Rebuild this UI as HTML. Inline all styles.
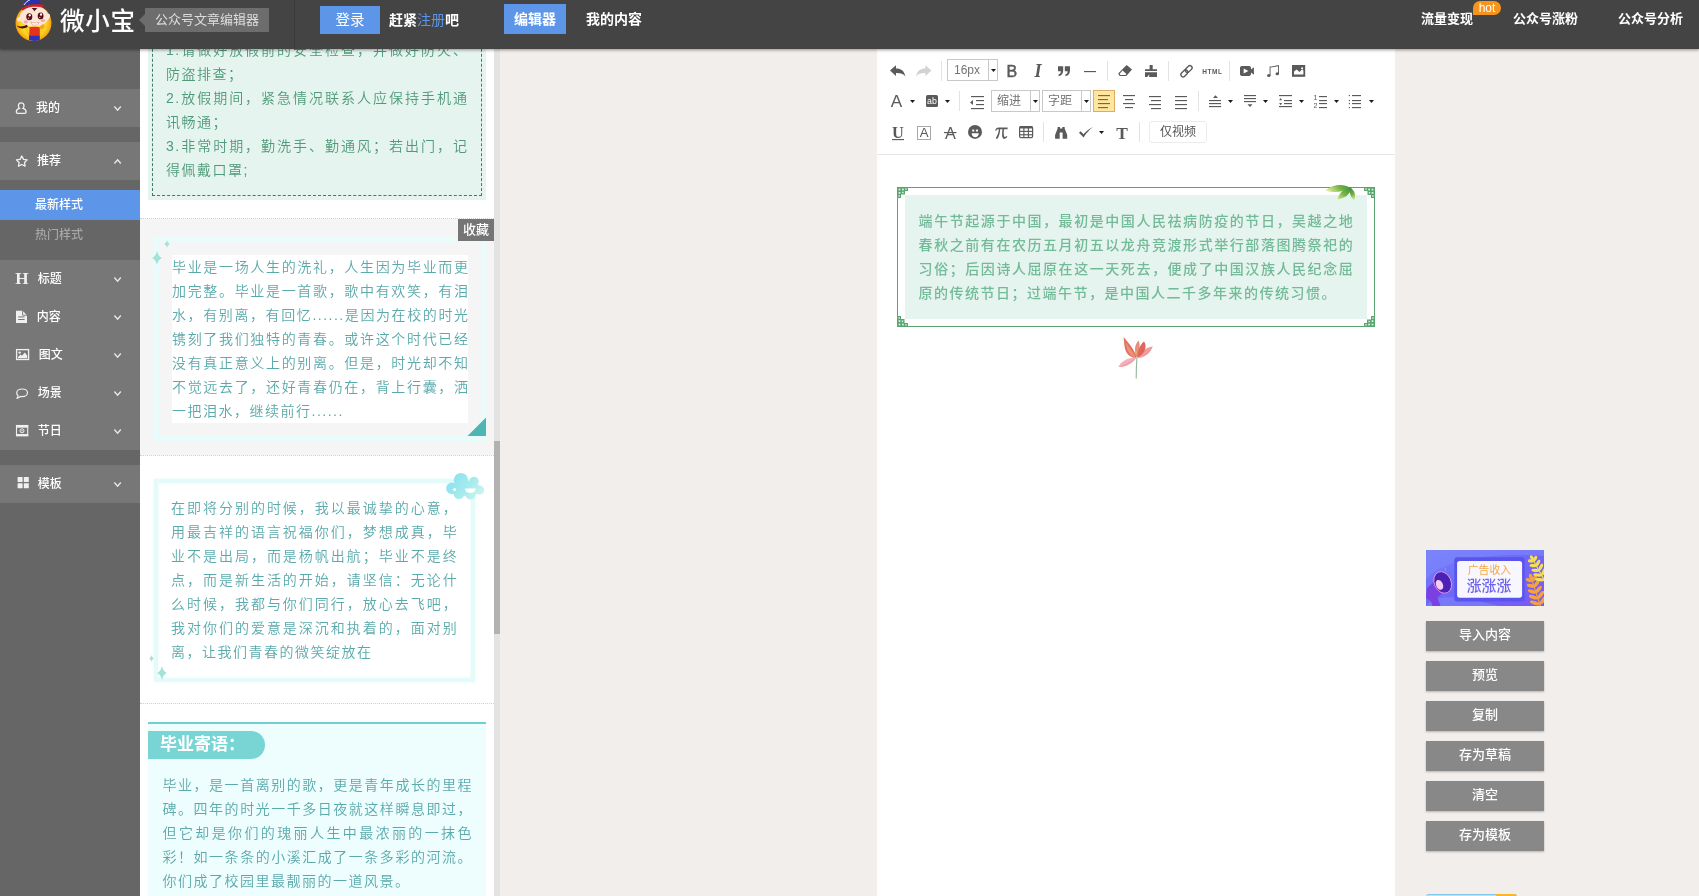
<!DOCTYPE html>
<html lang="zh-CN">
<head>
<meta charset="utf-8">
<title>微小宝 公众号文章编辑器</title>
<style>
*{box-sizing:border-box;margin:0;padding:0}
html,body{width:1699px;height:896px;overflow:hidden}
body{background:#f1eeeb;font-family:"Liberation Sans","Noto Sans CJK SC",sans-serif;position:relative;color:#333}
.abs{position:absolute}
#hd,#sb,#pn,#ed,#rt{will-change:transform}
/* header */
#hd{position:absolute;left:0;top:0;width:1699px;height:49px;background:#444;z-index:50;box-shadow:0 1px 3px rgba(0,0,0,.4)}
#hd .t{position:absolute;color:#fff;white-space:nowrap}
/* sidebar */
#sb{position:absolute;left:0;top:48px;width:140px;height:848px;background:#666;z-index:5}
#sb .it{position:absolute;left:0;width:140px;height:38px;background:#777;color:#fff;font-size:12px;line-height:39px;font-weight:500}
#sb .it span{position:absolute;left:36px;top:0}
#sb .it svg{position:absolute}
#sb .sub{position:absolute;left:0;width:140px;height:30px;line-height:31px;font-size:12px;padding-left:35px;color:#a6a6a6;font-weight:500}
#sb .sub.on{background:#5d96e9;color:#fff}
/* panel */
#pn{position:absolute;left:140px;top:48px;width:354px;height:848px;background:#fff;overflow:hidden}
#sc{position:absolute;left:494px;top:48px;width:6px;height:848px;background:#e3e3e3}
#sc i{position:absolute;left:0;top:393px;width:6px;height:193px;background:#b2b2b2}
.ln{position:absolute;height:24px;font-weight:350;line-height:24px;font-size:14px;letter-spacing:1.5px;white-space:nowrap}
.ln.j{text-align:justify;text-align-last:justify;white-space:nowrap;overflow:hidden}
/* editor */
#ed{position:absolute;left:877px;top:48px;width:518px;height:848px;background:#fff}
/* right */
.rb{position:absolute;left:1426px;width:118px;height:30px;background:#888;color:#fff;font-size:13px;line-height:28px;font-weight:500;text-align:center;box-shadow:0 1px 2px rgba(0,0,0,.25)}
</style>
</head>
<body>
<div id="hd">
<svg class="abs" style="left:12px;top:0" width="44" height="44" viewBox="12 0 44 44">
 <defs><radialGradient id="lg" cx="50%" cy="50%" r="52%"><stop offset="0" stop-color="#ffe640"/><stop offset=".7" stop-color="#fdd31c"/><stop offset=".93" stop-color="#f5a516"/><stop offset="1" stop-color="#d97a10"/></radialGradient></defs>
 <circle cx="33.5" cy="23.1" r="18" fill="url(#lg)"/>
 <path d="M22.8 6 C24.5 1 28 -3 33 -4 C37.5 -3 40 1 41 4.4 C34 3 28 4 22.8 6Z" fill="#2b2fb0"/>
 <path d="M23.9 5 C25.5 2.6 27.6 0.8 30.2 -0.4" stroke="#fff" stroke-width="1" fill="none"/>
 <path d="M21.8 8.4 C27 5 36 3.4 42.6 4.6 L43.2 7 C36 6.4 28 7.8 22.6 10.6Z" fill="#d9182e"/>
 <path d="M21 13 C24 8.4 30 6.6 36 6.8 C42 7 47 10 48.4 15 C50 15.4 50 19 48 19.6 C46.4 24 40.6 26.6 34 26.4 C27 26.4 22 23.6 20.6 20.4 C18.4 20.6 17.8 17.4 19.8 16.6 C19.8 15.4 20.2 14.2 21 13Z" fill="#fde6d8"/>
 <path d="M31.6 8.2 C33 9 34 10.4 34.2 11.6 C35 10.2 36.2 9.2 37.6 8.6 C35.6 8 33.6 8 31.6 8.2Z" fill="#4a150e"/>
 <ellipse cx="29.3" cy="16.7" rx="3" ry="3.5" fill="#5c0f12"/><ellipse cx="29.7" cy="15.3" rx="1.1" ry="1.3" fill="#fff"/><circle cx="28.5" cy="18.2" r=".6" fill="#f5c0b0"/>
 <ellipse cx="40.6" cy="15.9" rx="2.9" ry="3.4" fill="#5c0f12"/><ellipse cx="41" cy="14.5" rx="1.1" ry="1.3" fill="#fff"/><circle cx="39.8" cy="17.4" r=".6" fill="#f5c0b0"/>
 <ellipse cx="25.8" cy="21.8" rx="2.3" ry="1.6" fill="#f6a9a4"/><ellipse cx="43" cy="20.6" rx="2.2" ry="1.5" fill="#f6a9a4"/>
 <path d="M30.9 22 C33.4 23.2 36.4 23.2 38.9 22.2 C38.4 24.6 36.6 25.4 34.8 25.2 C32.8 25.2 31.4 24 30.9 22Z" fill="#fff" stroke="#c9604a" stroke-width=".4"/>
 <path d="M28.4 27.6 C30 26.6 38 26.4 39.8 27.4 L39.8 36 L29 36Z" fill="#e8321c"/>
 <path d="M29 35.8 H39.8 V40 C36.6 41.2 32.4 41.2 29 40Z" fill="#2f33b4"/>
 <path d="M26.6 28.4 C27.6 27.2 29 27 29.6 27.6 L29.2 34.6 C28 33.6 26.6 31.4 26.6 28.4Z" fill="#fdd838" stroke="#c78a14" stroke-width=".4"/>
 <path d="M16.6 25.6 C19.6 27 23.6 26.6 26.8 24.8 L27.8 26.8 C24.4 29.2 19 29.4 16.6 25.6Z" fill="#4a150e"/>
 <path d="M39.4 27.6 C40.4 25.8 42 24.4 43.8 24.2 C44.8 25.4 44.4 27.6 42.8 29 C41.6 29.8 40.2 29.4 39.4 27.6Z" fill="#f6a02a"/><ellipse cx="18.6" cy="19.6" rx="1.6" ry="2.2" fill="#fde6d8"/><ellipse cx="48.6" cy="16" rx="1.5" ry="2.2" fill="#fde6d8"/>
</svg>
<div class="t" style="left:60px;top:5px;font-size:24.5px;line-height:34px;letter-spacing:.8px;font-weight:500">微小宝</div>
<div class="abs" style="left:139px;top:14px;width:0;height:0;border:6px solid transparent;border-left:0;border-right:6px solid #6d6d6d"></div>
<div class="abs" style="left:145px;top:8px;width:124px;height:24px;background:#6d6d6d;color:#ddd;font-size:13px;line-height:24px;text-align:center">公众号文章编辑器</div>
<div class="abs" style="left:294px;top:0;width:1px;height:49px;background:#3a3a3a"></div>
<div class="abs" style="left:320px;top:6px;width:60px;height:28px;background:#5d96e9;color:#fff;font-size:14.5px;line-height:28px;text-align:center">登录</div>
<div class="t" style="left:389px;top:10px;font-size:14px;line-height:20px;font-weight:700">赶紧<span style="color:#5d96e9;font-weight:400">注册</span>吧</div>
<div class="abs" style="left:504px;top:4px;width:62px;height:30px;background:#5d96e9;color:#fff;font-size:14px;line-height:30px;text-align:center;font-weight:700">编辑器</div>
<div class="t" style="left:586px;top:9px;font-size:14px;line-height:20px;font-weight:700">我的内容</div>
<div class="t" style="left:1421px;top:9px;font-size:13px;line-height:20px;font-weight:700">流量变现</div>
<div class="abs" style="left:1473px;top:1px;width:28px;height:14px;background:#f7941d;border-radius:7px 7px 7px 0;color:#fff;font-size:12px;line-height:14.5px;text-align:center">hot</div>
<div class="t" style="left:1513px;top:9px;font-size:13px;line-height:20px;font-weight:700">公众号涨粉</div>
<div class="t" style="left:1618px;top:9px;font-size:13px;line-height:20px;font-weight:700">公众号分析</div>
</div>
<div id="sb">
<div class="it" style="top:41px"><span style="left:36px">我的</span></div>
<svg class="abs" style="left:112px;top:55px" width="12" height="10" viewBox="112 103 12 10"><path d="M114.4 106.5 L117.6 110.1 L120.8 106.5" fill="none" stroke="#e8e8e8" stroke-width="1.4"/></svg>
<div class="it" style="top:94px"><span style="left:37px">推荐</span></div>
<svg class="abs" style="left:112px;top:108px" width="12" height="10" viewBox="112 156 12 10"><path d="M114.4 163.5 L117.6 159.9 L120.8 163.5" fill="none" stroke="#e8e8e8" stroke-width="1.4"/></svg>
<div class="it" style="top:212px"><span style="left:37.8px">标题</span></div>
<svg class="abs" style="left:112px;top:226px" width="12" height="10" viewBox="112 274 12 10"><path d="M114.4 277.5 L117.6 281.1 L120.8 277.5" fill="none" stroke="#e8e8e8" stroke-width="1.4"/></svg>
<div class="it" style="top:250px"><span style="left:36.7px">内容</span></div>
<svg class="abs" style="left:112px;top:264px" width="12" height="10" viewBox="112 312 12 10"><path d="M114.4 315.5 L117.6 319.1 L120.8 315.5" fill="none" stroke="#e8e8e8" stroke-width="1.4"/></svg>
<div class="it" style="top:288px"><span style="left:38.8px">图文</span></div>
<svg class="abs" style="left:112px;top:302px" width="12" height="10" viewBox="112 350 12 10"><path d="M114.4 353.5 L117.6 357.1 L120.8 353.5" fill="none" stroke="#e8e8e8" stroke-width="1.4"/></svg>
<div class="it" style="top:326px"><span style="left:37.8px">场景</span></div>
<svg class="abs" style="left:112px;top:340px" width="12" height="10" viewBox="112 388 12 10"><path d="M114.4 391.5 L117.6 395.1 L120.8 391.5" fill="none" stroke="#e8e8e8" stroke-width="1.4"/></svg>
<div class="it" style="top:364px"><span style="left:37.8px">节日</span></div>
<svg class="abs" style="left:112px;top:378px" width="12" height="10" viewBox="112 426 12 10"><path d="M114.4 429.5 L117.6 433.1 L120.8 429.5" fill="none" stroke="#e8e8e8" stroke-width="1.4"/></svg>
<div class="it" style="top:417px"><span style="left:37.8px">模板</span></div>
<svg class="abs" style="left:112px;top:431px" width="12" height="10" viewBox="112 479 12 10"><path d="M114.4 482.5 L117.6 486.1 L120.8 482.5" fill="none" stroke="#e8e8e8" stroke-width="1.4"/></svg>
<svg class="abs" style="left:14px;top:52px" width="15" height="16" viewBox="14 100 15 16"><path d="M21.2 102.9 C23 102.9 24 104.2 24 105.8 C24 106.9 23.6 107.8 22.9 108.4 C25 108.9 26.1 110.2 26.1 112 C26.1 113 25.5 113.4 24.6 113.4 H17.8 C16.9 113.4 16.3 113 16.3 112 C16.3 110.2 17.4 108.9 19.5 108.4 C18.8 107.8 18.4 106.9 18.4 105.8 C18.4 104.2 19.4 102.9 21.2 102.9Z" fill="none" stroke="#f0f0f0" stroke-width="1.3"/></svg>
<svg class="abs" style="left:14px;top:105px" width="16" height="16" viewBox="14 153 16 16"><path d="M21.8 156 L23.5 159.4 L27.2 159.9 L24.5 162.5 L25.1 166.2 L21.8 164.5 L18.5 166.2 L19.1 162.5 L16.4 159.9 L20.1 159.4Z" fill="none" stroke="#f0f0f0" stroke-width="1.3" stroke-linejoin="round"/></svg>
<svg class="abs" style="left:14px;top:222px" width="16" height="17" viewBox="14 270 16 17"><text x="22" y="284.3" text-anchor="middle" font-family="Liberation Serif,serif" font-weight="bold" font-size="17.2" fill="#f0f0f0">H</text></svg>
<svg class="abs" style="left:14px;top:260px" width="16" height="17" viewBox="14 308 16 17"><path d="M16 310.8 H22.6 L27 315.2 V323.1 H16Z" fill="#f0f0f0"/><path d="M22.6 310.8 V315.2 H27" fill="none" stroke="#777" stroke-width=".9"/><rect x="18.2" y="316.4" width="6.4" height="1" fill="#777"/><rect x="18.2" y="319" width="6.4" height="1" fill="#777"/></svg>
<svg class="abs" style="left:14px;top:299px" width="17" height="15" viewBox="14 347 17 15"><rect x="16.6" y="349.6" width="12" height="9.9" fill="none" stroke="#f0f0f0" stroke-width="1.3"/><circle cx="19.6" cy="352.6" r="1.2" fill="#f0f0f0"/><path d="M18 358.2 L18 357 L20.6 354.6 L22 355.8 L24.8 352.4 L27.2 355.4 V358.2Z" fill="#f0f0f0"/></svg>
<svg class="abs" style="left:14px;top:338px" width="17" height="15" viewBox="14 386 17 15"><path d="M22.2 389 C25.2 389 27.5 390.6 27.5 392.8 C27.5 395 25.2 396.6 22.2 396.6 C21.6 396.6 21 396.5 20.5 396.4 C19.6 397.4 18.4 398 16.9 398.3 C17.6 397.5 18 396.7 18.1 395.8 C17.2 395 16.7 394 16.7 392.8 C16.7 390.6 19.2 389 22.2 389Z" fill="none" stroke="#f0f0f0" stroke-width="1.2" stroke-linejoin="round"/></svg>
<svg class="abs" style="left:14px;top:375px" width="17" height="15" viewBox="14 423 17 15"><rect x="16.5" y="425.5" width="11.2" height="10.2" fill="none" stroke="#f0f0f0" stroke-width="1.1"/><rect x="16" y="425" width="12.2" height="2.7" fill="#f0f0f0"/><rect x="16" y="434" width="12.2" height="2.2" fill="#f0f0f0"/><circle cx="22" cy="430.8" r="2" fill="none" stroke="#f0f0f0" stroke-width="1"/><circle cx="22" cy="430.8" r=".7" fill="#f0f0f0"/></svg>
<svg class="abs" style="left:16px;top:427px" width="15" height="15" viewBox="16 475 15 15"><rect x="17.6" y="477" width="5" height="5" rx=".5" fill="#f0f0f0"/><rect x="23.8" y="477" width="5" height="5" rx=".5" fill="#f0f0f0"/><rect x="17.6" y="483.2" width="5" height="5" rx=".5" fill="#f0f0f0"/><rect x="23.8" y="483.2" width="5" height="5" rx=".5" fill="#f0f0f0"/></svg>
<div class="sub on" style="top:142px">最新样式</div>
<div class="sub" style="top:172px">热门样式</div>
</div>
<div id="pn">
<div class="abs" style="left:8px;top:-28px;width:338px;height:179.5px;background:#e5f4ee"></div>
<div class="abs" style="left:12px;top:-24px;width:330px;height:171.5px;border:1px dashed #3a8062"></div>
<div class="ln j" style="left:26px;top:-10px;width:302.5px;color:#4f9a7a">1.请做好放假前的安全检查，并做好防火、</div>
<div class="ln" style="left:26px;top:14px;width:302.5px;color:#4f9a7a">防盗排查；</div>
<div class="ln j" style="left:26px;top:38px;width:302.5px;color:#4f9a7a">2.放假期间，紧急情况联系人应保持手机通</div>
<div class="ln" style="left:26px;top:62px;width:302.5px;color:#4f9a7a">讯畅通；</div>
<div class="ln j" style="left:26px;top:86px;width:302.5px;color:#4f9a7a">3.非常时期，勤洗手、勤通风；若出门，记</div>
<div class="ln" style="left:26px;top:110px;width:302.5px;color:#4f9a7a">得佩戴口罩;</div>
<div class="abs" style="left:0;top:170px;width:354px;height:0;border-top:1px dotted #cfcfcf"></div>
<div class="abs" style="left:0;top:407px;width:354px;height:0;border-top:1px dotted #cfcfcf"></div>
<div class="abs" style="left:0;top:655px;width:354px;height:0;border-top:1px dotted #cfcfcf"></div>
<div class="abs" style="left:0;top:171px;width:354px;height:236px;background:#f5f5f5"></div>
<div class="abs" style="left:14px;top:189px;width:332px;height:204px;border:5px solid #e9fcfb;box-shadow:0 0 2px #e9fcfb, inset 0 0 2px #e9fcfb"></div>
<div class="abs" style="left:31.5px;top:207px;width:296.5px;height:168px;background:#fff"></div>
<div class="ln j" style="left:32px;top:207px;width:297.5px;color:#5aa9ab">毕业是一场人生的洗礼，人生因为毕业而更</div>
<div class="ln j" style="left:32px;top:231px;width:297.5px;color:#5aa9ab">加完整。毕业是一首歌，歌中有欢笑，有泪</div>
<div class="ln j" style="left:32px;top:255px;width:297.5px;color:#5aa9ab">水，有别离，有回忆......是因为在校的时光</div>
<div class="ln j" style="left:32px;top:279px;width:297.5px;color:#5aa9ab">镌刻了我们独特的青春。或许这个时代已经</div>
<div class="ln j" style="left:32px;top:303px;width:297.5px;color:#5aa9ab">没有真正意义上的别离。但是，时光却不知</div>
<div class="ln j" style="left:32px;top:327px;width:297.5px;color:#5aa9ab">不觉远去了，还好青春仍在，背上行囊，洒</div>
<div class="ln" style="left:32px;top:351px;width:297.5px;color:#5aa9ab">一把泪水，继续前行......</div>
<div class="abs" style="left:318px;top:171px;width:36px;height:22px;background:#757575;color:#fff;font-size:13px;font-weight:500;line-height:22px;text-align:center">收藏</div>
<svg class="abs" style="left:24.3px;top:192.0px" width="6" height="8" viewBox="0 0 10 14"><path d="M5 0 C5.8 3.6 7.4 5.8 10 7 C7.4 8.2 5.8 10.4 5 14 C4.2 10.4 2.6 8.2 0 7 C2.6 5.8 4.2 3.6 5 0Z" fill="#a2e2d7"/></svg>
<svg class="abs" style="left:11.7px;top:202.8px" width="10" height="14" viewBox="0 0 10 14"><path d="M5 0 C5.8 3.6 7.4 5.8 10 7 C7.4 8.2 5.8 10.4 5 14 C4.2 10.4 2.6 8.2 0 7 C2.6 5.8 4.2 3.6 5 0Z" fill="#a2e2d7"/></svg>
<svg class="abs" style="left:326.5px;top:368.5px" width="19.5" height="19.5" viewBox="0 0 20 20"><path d="M20 0 L20 20 L0 20Z" fill="#4db5b3"/></svg>
<div class="abs" style="left:13.5px;top:430.5px;width:321.5px;height:203.5px;border:4px solid #e4fbfa;box-shadow:0 0 3px #e6fbfa, inset 0 0 3px #e6fbfa"></div>
<div class="ln j" style="left:31px;top:448px;width:287.2px;color:#5aa9ab">在即将分别的时候，我以最诚挚的心意，</div>
<div class="ln j" style="left:31px;top:472px;width:287.2px;color:#5aa9ab">用最吉祥的语言祝福你们，梦想成真，毕</div>
<div class="ln j" style="left:31px;top:496px;width:287.2px;color:#5aa9ab">业不是出局，而是杨帆出航；毕业不是终</div>
<div class="ln j" style="left:31px;top:520px;width:287.2px;color:#5aa9ab">点，而是新生活的开始，请坚信：无论什</div>
<div class="ln j" style="left:31px;top:544px;width:287.2px;color:#5aa9ab">么时候，我都与你们同行，放心去飞吧，</div>
<div class="ln j" style="left:31px;top:568px;width:287.2px;color:#5aa9ab">我对你们的爱意是深沉和执着的，面对别</div>
<div class="ln" style="left:31px;top:592px;width:287.2px;color:#5aa9ab">离，让我们青春的微笑绽放在</div>
<svg class="abs" style="left:8.5px;top:606.5px" width="5" height="7" viewBox="0 0 10 14"><path d="M5 0 C5.8 3.6 7.4 5.8 10 7 C7.4 8.2 5.8 10.4 5 14 C4.2 10.4 2.6 8.2 0 7 C2.6 5.8 4.2 3.6 5 0Z" fill="#a2e2d7"/></svg>
<svg class="abs" style="left:17.0px;top:617.5px" width="10" height="14" viewBox="0 0 10 14"><path d="M5 0 C5.8 3.6 7.4 5.8 10 7 C7.4 8.2 5.8 10.4 5 14 C4.2 10.4 2.6 8.2 0 7 C2.6 5.8 4.2 3.6 5 0Z" fill="#a2e2d7"/></svg>
<svg class="abs" style="left:304px;top:423px" width="42" height="30" viewBox="444 471 42 30">
<defs><linearGradient id="cg" gradientUnits="userSpaceOnUse" x1="448" y1="474" x2="482" y2="500"><stop offset="0" stop-color="#86e0ee"/><stop offset=".55" stop-color="#a6ebee"/><stop offset="1" stop-color="#d2f6f0"/></linearGradient></defs>
<g fill="url(#cg)"><circle cx="461" cy="480.2" r="7.2"/><circle cx="474" cy="481.6" r="4.8"/><circle cx="452" cy="488.4" r="5.8"/><circle cx="479.6" cy="490" r="4.6"/><circle cx="459" cy="493.6" r="5.4"/><circle cx="470.6" cy="494.2" r="5.2"/><ellipse cx="465.5" cy="488.5" rx="14.5" ry="7.6"/></g>
<circle cx="454.6" cy="489.4" r="1.5" fill="#fff"/>
<path d="M465 488.4 H475.8 C475.6 491.4 473.4 493 470.4 493 C467.4 493 465.2 491.4 465 488.4Z" fill="#fff"/></svg>
<div class="abs" style="left:8px;top:673.5px;width:338px;height:180px;background:#eefdfd;border-top:2.5px solid #70cfcf"></div>
<div class="abs" style="left:8px;top:683px;width:117px;height:27.5px;background:#79d4d4;border-radius:0 14px 14px 0;color:#fff;font:700 17px/27px 'Liberation Sans','Noto Sans CJK SC',sans-serif;padding-left:12px;letter-spacing:0">毕业寄语：</div>
<div class="ln j" style="left:22.5px;top:725px;width:310.5px;color:#5aa9ab">毕业，是一首离别的歌，更是青年成长的里程</div>
<div class="ln j" style="left:22.5px;top:749px;width:310.5px;color:#5aa9ab">碑。四年的时光一千多日夜就这样瞬息即过，</div>
<div class="ln j" style="left:22.5px;top:773px;width:310.5px;color:#5aa9ab">但它却是你们的瑰丽人生中最浓丽的一抹色</div>
<div class="ln j" style="left:22.5px;top:797px;width:310.5px;color:#5aa9ab">彩！如一条条的小溪汇成了一条多彩的河流。</div>
<div class="ln" style="left:22.5px;top:821px;width:310.5px;color:#5aa9ab">你们成了校园里最靓丽的一道风景。</div>
</div>
<div id="sc"><i></i></div>
<div id="ed">
<div class="abs" style="left:0;top:106px;width:518px;height:1px;background:#e6e6e6"></div>
<svg class="abs" style="left:9px;top:12px" width="24" height="22" viewBox="886 60 24 22"><path d="M890 70.6 L896 65.2 V68.4 C900.5 68.3 904.2 70.3 905.4 76.4 C903.2 73.6 900.6 72.9 896 73 V76Z" fill="#5a5a5a"/></svg>
<svg class="abs" style="left:35px;top:12px" width="24" height="22" viewBox="912 60 24 22"><g transform="translate(1821.4,0) scale(-1,1)"><path d="M890 70.6 L896 65.2 V68.4 C900.5 68.3 904.2 70.3 905.4 76.4 C903.2 73.6 900.6 72.9 896 73 V76Z" fill="#d2d2d2"/></g></svg>
<div class="abs" style="left:64px;top:13px;width:1px;height:20px;background:#e3e3e3"></div>
<div class="abs" style="left:70px;top:11px;width:51px;height:22px;border:1px solid #c8c8c8;background:#fff"></div><div class="abs" style="left:111px;top:11px;width:1px;height:22px;background:#c8c8c8"></div><div class="abs" style="left:77px;top:11px;height:22px;line-height:22px;font-size:12px;color:#747474;white-space:nowrap">16px</div><svg class="abs" style="left:113px;top:20px" width="7" height="5" viewBox="990 68 7 5"><path d="M991 69 H996 L993.5 72Z" fill="#1a1a1a"/></svg>
<svg class="abs" style="left:125px;top:12px" width="20" height="22" viewBox="1002 60 20 22"><text x="1011.8" y="76.6" text-anchor="middle" font-family="Liberation Sans,sans-serif" font-size="16" fill="#5a5a5a" stroke="#5a5a5a" stroke-width=".45">B</text></svg>
<svg class="abs" style="left:151px;top:12px" width="20" height="22" viewBox="1028 60 20 22"><text x="1038" y="77" text-anchor="middle" font-family="Liberation Serif,serif" font-size="18.2" fill="#5a5a5a" font-style="italic" font-weight="bold">I</text></svg>
<svg class="abs" style="left:177px;top:12px" width="20" height="22" viewBox="1054 60 20 22"><path d="M1058 66.3 H1063.2 V70.6 C1063.2 73.6 1061.8 75.6 1058.6 76.3 V74.5 C1060 74.1 1060.8 73 1060.8 71.2 H1058Z M1064.8 66.3 H1070.0 V70.6 C1070.0 73.6 1068.6 75.6 1065.3999999999999 76.3 V74.5 C1066.8 74.1 1067.6 73 1067.6 71.2 H1064.8Z" fill="#5a5a5a"/></svg>
<svg class="abs" style="left:203px;top:12px" width="20" height="22" viewBox="1080 60 20 22"><rect x="1084" y="71" width="12" height="1.15" fill="#5a5a5a"/></svg>
<div class="abs" style="left:230px;top:13px;width:1px;height:20px;background:#e3e3e3"></div>
<svg class="abs" style="left:237px;top:12px" width="22" height="22" viewBox="1114 60 22 22"><path d="M1126.6 64.9 L1132 69.6 L1126.3 76 H1119.6 L1118.2 73.6Z" fill="#5a5a5a"/><path d="M1122.6 70.6 L1126.4 73.9 L1125.6 74.9 H1120.3 L1119.7 73.8Z" fill="#fff"/></svg>
<svg class="abs" style="left:264px;top:12px" width="20" height="22" viewBox="1141 60 20 22"><path d="M1149.6 65 H1152.7 V69.2 H1157 V71 H1145 V69.2 H1149.6Z M1145 72.2 H1157 V77 H1149.2 V74.4 L1147.2 77 H1145Z" fill="#5a5a5a"/></svg>
<div class="abs" style="left:291px;top:13px;width:1px;height:20px;background:#e3e3e3"></div>
<svg class="abs" style="left:299px;top:12px" width="22" height="22" viewBox="1176 60 22 22"><g fill="none" stroke="#5a5a5a" stroke-width="1.35" transform="rotate(-45 1186.5 71.2)"><rect x="1179.5" y="69" width="7.9" height="4.4" rx="2.2"/><rect x="1185.6" y="69" width="7.9" height="4.4" rx="2.2"/></g></svg>
<svg class="abs" style="left:323px;top:12px" width="24" height="22" viewBox="1200 60 24 22"><text x="1212.3" y="74" text-anchor="middle" font-family="Liberation Sans,sans-serif" font-size="6.5" fill="#5a5a5a" font-weight="bold" letter-spacing=".55">HTML</text></svg>
<div class="abs" style="left:352px;top:13px;width:1px;height:20px;background:#e3e3e3"></div>
<svg class="abs" style="left:360px;top:12px" width="20" height="22" viewBox="1237 60 20 22"><path d="M1240 68 C1240 66.8 1240.8 66 1242 66 H1249 C1250.2 66 1251 66.8 1251 68 V69.4 L1253.9 67.2 V74.8 L1251 72.6 V74 C1251 75.2 1250.2 76 1249 76 H1242 C1240.8 76 1240 75.2 1240 74Z" fill="#5a5a5a"/><path d="M1243.7 68.4 L1248.4 71 L1243.7 73.6Z" fill="#fff"/></svg>
<svg class="abs" style="left:386px;top:12px" width="20" height="22" viewBox="1263 60 20 22"><path d="M1269.6 66.6 C1272.5 66.4 1275.5 65.8 1278.9 64.9 V73.8 H1278 V66.2 C1275.4 66.9 1272.9 67.3 1270.5 67.5 V75.4 H1269.6Z" fill="#5a5a5a"/><ellipse cx="1268.8" cy="75.4" rx="1.75" ry="1.5" fill="#5a5a5a"/><ellipse cx="1277.3" cy="73.8" rx="1.75" ry="1.5" fill="#5a5a5a"/></svg>
<svg class="abs" style="left:412px;top:12px" width="20" height="22" viewBox="1289 60 20 22"><rect x="1292" y="65" width="13.2" height="11.8" fill="#5a5a5a"/><path d="M1294 74.4 V71.6 L1296.6 69.6 L1299.6 72 L1302.2 69.2 L1303.4 70.4 V74.4Z" fill="#fff"/><circle cx="1302.1" cy="68.3" r="1" fill="#fff"/></svg>
<svg class="abs" style="left:9px;top:42px" width="22" height="22" viewBox="886 90 22 22"><text x="896.5" y="107" text-anchor="middle" font-family="Liberation Sans,sans-serif" font-size="17.2" fill="#5a5a5a" >A</text></svg>
<svg class="abs" style="left:32px;top:51px" width="7" height="5" viewBox="909 99 7 5"><path d="M910 100 H915 L912.5 103Z" fill="#1a1a1a"/></svg>
<svg class="abs" style="left:45px;top:42px" width="20" height="22" viewBox="922 90 20 22"><rect x="926" y="95" width="12" height="12" rx="1.6" fill="#5a5a5a"/><text x="932" y="104.2" text-anchor="middle" font-family="Liberation Sans,sans-serif" font-size="8.8" fill="#fff" >ab</text></svg>
<svg class="abs" style="left:67px;top:51px" width="7" height="5" viewBox="944 99 7 5"><path d="M945 100 H950 L947.5 103Z" fill="#1a1a1a"/></svg>
<div class="abs" style="left:82px;top:43px;width:1px;height:20px;background:#e3e3e3"></div>
<svg class="abs" style="left:90px;top:42px" width="20" height="22" viewBox="967 90 20 22"><rect x="971" y="96" width="13" height="1.15" fill="#5a5a5a"/><rect x="976" y="100" width="8" height="1.15" fill="#5a5a5a"/><rect x="976" y="104" width="8" height="1.15" fill="#5a5a5a"/><rect x="971" y="108" width="13" height="1.15" fill="#5a5a5a"/><path d="M970 102.5 L973 100 V105Z" fill="#5a5a5a"/></svg>
<div class="abs" style="left:114px;top:42px;width:49px;height:22px;border:1px solid #c8c8c8;background:#fff"></div><div class="abs" style="left:153px;top:42px;width:1px;height:22px;background:#c8c8c8"></div><div class="abs" style="left:120px;top:42px;height:22px;line-height:22px;font-size:12px;color:#747474;white-space:nowrap">缩进</div><svg class="abs" style="left:155px;top:51px" width="7" height="5" viewBox="1032 99 7 5"><path d="M1033 100 H1038 L1035.5 103Z" fill="#1a1a1a"/></svg>
<div class="abs" style="left:165px;top:42px;width:49px;height:22px;border:1px solid #c8c8c8;background:#fff"></div><div class="abs" style="left:204px;top:42px;width:1px;height:22px;background:#c8c8c8"></div><div class="abs" style="left:171px;top:42px;height:22px;line-height:22px;font-size:12px;color:#747474;white-space:nowrap">字距</div><svg class="abs" style="left:206px;top:51px" width="7" height="5" viewBox="1083 99 7 5"><path d="M1084 100 H1089 L1086.5 103Z" fill="#1a1a1a"/></svg>
<div class="abs" style="left:216px;top:42px;width:22px;height:22px;background:#ffe69f;border:1px solid #dcac6c"></div>
<svg class="abs" style="left:217px;top:43px" width="20" height="20" viewBox="1094 91 20 20"><rect x="1098" y="95" width="12" height="1.15" fill="#7a6a36"/><rect x="1098" y="99" width="10" height="1.15" fill="#7a6a36"/><rect x="1098" y="103" width="12" height="1.15" fill="#7a6a36"/><rect x="1098" y="107" width="10" height="1.15" fill="#7a6a36"/></svg>
<svg class="abs" style="left:242px;top:43px" width="20" height="20" viewBox="1119 91 20 20"><rect x="1123" y="95" width="12" height="1.15" fill="#5a5a5a"/><rect x="1125" y="99" width="8" height="1.15" fill="#5a5a5a"/><rect x="1123" y="103" width="12" height="1.15" fill="#5a5a5a"/><rect x="1125" y="107" width="8" height="1.15" fill="#5a5a5a"/></svg>
<svg class="abs" style="left:268px;top:43px" width="20" height="20" viewBox="1145 91 20 20"><rect x="1149" y="96" width="12" height="1.15" fill="#5a5a5a"/><rect x="1151" y="100" width="10" height="1.15" fill="#5a5a5a"/><rect x="1149" y="104" width="12" height="1.15" fill="#5a5a5a"/><rect x="1151" y="108" width="10" height="1.15" fill="#5a5a5a"/></svg>
<svg class="abs" style="left:294px;top:43px" width="20" height="20" viewBox="1171 91 20 20"><rect x="1175" y="96" width="12" height="1.15" fill="#5a5a5a"/><rect x="1175" y="100" width="12" height="1.15" fill="#5a5a5a"/><rect x="1175" y="104" width="12" height="1.15" fill="#5a5a5a"/><rect x="1175" y="108" width="12" height="1.15" fill="#5a5a5a"/></svg>
<div class="abs" style="left:321px;top:43px;width:1px;height:20px;background:#e3e3e3"></div>
<svg class="abs" style="left:328px;top:43px" width="20" height="20" viewBox="1205 91 20 20"><path d="M1215.5 95.2 L1218 98 H1213Z" fill="#5a5a5a"/><rect x="1209" y="100" width="12" height="1.15" fill="#5a5a5a"/><rect x="1209" y="103" width="12" height="1.15" fill="#5a5a5a"/><rect x="1209" y="106" width="12" height="1.15" fill="#5a5a5a"/></svg>
<svg class="abs" style="left:350px;top:51px" width="7" height="5" viewBox="1227 99 7 5"><path d="M1228 100 H1233 L1230.5 103Z" fill="#1a1a1a"/></svg>
<svg class="abs" style="left:363px;top:43px" width="20" height="20" viewBox="1240 91 20 20"><rect x="1244" y="95" width="12" height="1.15" fill="#5a5a5a"/><rect x="1244" y="98" width="12" height="1.15" fill="#5a5a5a"/><rect x="1244" y="101" width="12" height="1.15" fill="#5a5a5a"/><path d="M1250 107 L1252.5 104.2 H1247.5Z" fill="#5a5a5a"/></svg>
<svg class="abs" style="left:385px;top:51px" width="7" height="5" viewBox="1262 99 7 5"><path d="M1263 100 H1268 L1265.5 103Z" fill="#1a1a1a"/></svg>
<svg class="abs" style="left:398px;top:43px" width="20" height="20" viewBox="1275 91 20 20"><rect x="1279" y="95" width="13" height="1.15" fill="#5a5a5a"/><rect x="1284" y="100" width="8" height="1.15" fill="#5a5a5a"/><rect x="1284" y="103" width="8" height="1.15" fill="#5a5a5a"/><rect x="1279" y="106" width="13" height="1.15" fill="#5a5a5a"/><path d="M1280.6 98 L1282.1 100.2 H1279.1Z M1280.6 105.2 L1282.1 103 H1279.1Z" fill="#5a5a5a"/></svg>
<svg class="abs" style="left:420.5px;top:51px" width="7" height="5" viewBox="1297.5 99 7 5"><path d="M1298.5 100 H1303.5 L1301.0 103Z" fill="#1a1a1a"/></svg>
<svg class="abs" style="left:433px;top:43px" width="20" height="20" viewBox="1310 91 20 20"><rect x="1319" y="96" width="8" height="1.15" fill="#5a5a5a"/><rect x="1319" y="100" width="8" height="1.15" fill="#5a5a5a"/><rect x="1319" y="103" width="8" height="1.15" fill="#5a5a5a"/><rect x="1319" y="107" width="8" height="1.15" fill="#5a5a5a"/><text x="1313.6" y="99.6" text-anchor="start" font-family="Liberation Sans,sans-serif" font-size="7.2" fill="#5a5a5a" >1</text><text x="1313.6" y="108" text-anchor="start" font-family="Liberation Sans,sans-serif" font-size="7.2" fill="#5a5a5a" >2</text></svg>
<svg class="abs" style="left:455.5px;top:51px" width="7" height="5" viewBox="1332.5 99 7 5"><path d="M1333.5 100 H1338.5 L1336.0 103Z" fill="#1a1a1a"/></svg>
<svg class="abs" style="left:468px;top:43px" width="20" height="20" viewBox="1345 91 20 20"><rect x="1352" y="95" width="9" height="1.15" fill="#5a5a5a"/><rect x="1352" y="100" width="9" height="1.15" fill="#5a5a5a"/><rect x="1352" y="103" width="9" height="1.15" fill="#5a5a5a"/><rect x="1352" y="107" width="9" height="1.15" fill="#5a5a5a"/><rect x="1348.8" y="95" width="1.2000000000000455" height="1.15" fill="#5a5a5a"/><rect x="1348.8" y="100" width="1.2000000000000455" height="1.15" fill="#5a5a5a"/><rect x="1348.8" y="103" width="1.2000000000000455" height="1.15" fill="#5a5a5a"/><rect x="1348.8" y="107" width="1.2000000000000455" height="1.15" fill="#5a5a5a"/></svg>
<svg class="abs" style="left:490.5px;top:51px" width="7" height="5" viewBox="1367.5 99 7 5"><path d="M1368.5 100 H1373.5 L1371.0 103Z" fill="#1a1a1a"/></svg>
<svg class="abs" style="left:10px;top:74px" width="22" height="22" viewBox="887 122 22 22"><text x="898" y="138" text-anchor="middle" font-family="Liberation Serif,serif" font-size="16.4" fill="#5a5a5a" font-weight="bold">U</text><rect x="892" y="139" width="12" height="1.15" fill="#5a5a5a"/></svg>
<svg class="abs" style="left:37px;top:74px" width="20" height="22" viewBox="914 122 20 22"><rect x="917.5" y="126.5" width="13" height="13" fill="none" stroke="#a8a8a8" stroke-width="1"/><text x="924.2" y="137.4" text-anchor="middle" font-family="Liberation Sans,sans-serif" font-size="13.2" fill="#5a5a5a" >A</text></svg>
<svg class="abs" style="left:63px;top:74px" width="20" height="22" viewBox="940 122 20 22"><text x="950.4" y="138.7" text-anchor="middle" font-family="Liberation Sans,sans-serif" font-size="16.2" fill="#5a5a5a" >A</text><rect x="944" y="132" width="12.5" height="1.15" fill="#5a5a5a"/></svg>
<svg class="abs" style="left:88px;top:74px" width="20" height="22" viewBox="965 122 20 22"><circle cx="975" cy="131.9" r="7" fill="#5a5a5a"/><rect x="972.2" y="129.6" width="2.1" height="1.9" fill="#fff"/><rect x="975.9" y="129.6" width="2.1" height="1.9" fill="#fff"/><path d="M971.6 133.3 H978.9 C978.6 135.8 977.1 137.3 975.2 137.3 C973.3 137.3 971.9 135.8 971.6 133.3Z" fill="#fff"/></svg>
<svg class="abs" style="left:114px;top:74px" width="20" height="22" viewBox="991 122 20 22"><path d="M995.2 130.6 C995.8 128.4 996.9 127.5 998.6 127.5 H1007.6 V129.2 H1004 C1003.7 131.8 1003.6 134.2 1004 136 C1004.3 137.2 1005.2 137.3 1006.4 136 L1007.4 136.8 C1006 138.8 1004 139.4 1002.9 138.2 C1001.8 136.8 1002 133 1002.5 129.2 H1000.2 C1000 132.6 999.2 135.8 997.6 138.6 C997 139.4 995.6 138.8 996 137.8 C997.6 135.2 998.6 132.4 998.9 129.2 C997.4 129.1 996.6 129.6 996.1 130.8Z" fill="#5a5a5a"/></svg>
<svg class="abs" style="left:139px;top:74px" width="20" height="22" viewBox="1016 122 20 22"><rect x="1019.6" y="126.6" width="13" height="11" rx="1.4" fill="none" stroke="#5a5a5a" stroke-width="1.2"/><rect x="1019.6" y="126.2" width="13" height="2.2" rx=".8" fill="#5a5a5a"/><rect x="1019.6" y="130.8" width="12.999999999999886" height="1.15" fill="#5a5a5a"/><rect x="1019.6" y="134.2" width="12.999999999999886" height="1.15" fill="#5a5a5a"/><rect x="1023.3" y="127" width="1.15" height="10.6" fill="#5a5a5a"/><rect x="1027.8" y="127" width="1.15" height="10.6" fill="#5a5a5a"/></svg>
<div class="abs" style="left:166px;top:74px;width:1px;height:20px;background:#e3e3e3"></div>
<svg class="abs" style="left:174px;top:74px" width="20" height="22" viewBox="1051 122 20 22"><path d="M1057.6 126.9 H1060 V128.6 H1062.3 V126.9 H1064.7 V128.6 L1067.2 135 V138.8 H1062.6 V132.6 H1059.7 V138.8 H1055.1 V135 L1057.6 128.6Z" fill="#5a5a5a"/></svg>
<svg class="abs" style="left:199px;top:74px" width="20" height="22" viewBox="1076 122 20 22"><path d="M1079 132.8 L1080.6 131.2 L1083.5 134.2 C1086 131.4 1089 128.8 1093 127 C1089 130 1086 133.6 1083.6 137.4Z" fill="#5a5a5a"/></svg>
<svg class="abs" style="left:221px;top:82px" width="7" height="5" viewBox="1098 130 7 5"><path d="M1099 131 H1104 L1101.5 134Z" fill="#1a1a1a"/></svg>
<svg class="abs" style="left:235px;top:74px" width="20" height="22" viewBox="1112 122 20 22"><text x="1122" y="138.8" text-anchor="middle" font-family="Liberation Serif,serif" font-size="17.4" fill="#5a5a5a" font-weight="bold">T</text></svg>
<div class="abs" style="left:262px;top:74px;width:1px;height:20px;background:#e3e3e3"></div>
<div class="abs" style="left:272px;top:73px;width:58px;height:22px;border:1px solid #ececec;border-radius:3px;font-size:12px;line-height:20px;color:#555;text-align:center">仅视频</div>
<div class="abs" style="left:20px;top:139px;width:478px;height:140px;border:1.5px solid #5aa46f"></div>
<div class="abs" style="left:28px;top:147px;width:462px;height:124px;background:#e5f4ee"></div>
<svg class="abs" style="left:20px;top:139px" width="11" height="11" viewBox="0 0 11 11"><g transform="rotate(0 5.5 5.5)"><path d="M0 0 H11 V4 H8 V7.5 H4 V11 H0Z" fill="#5aa46f"/><rect x="1.6" y="1.6" width="1.8" height="1.8" fill="#d8f0dc"/><rect x="5" y="1.6" width="1.8" height="1.8" fill="#d8f0dc"/><rect x="8.2" y="1.4" width="1.6" height="1.4" fill="#d8f0dc"/><rect x="1.6" y="5" width="1.8" height="1.8" fill="#d8f0dc"/><rect x="5" y="4.8" width="1.6" height="1.4" fill="#d8f0dc"/><rect x="1.4" y="8.2" width="1.4" height="1.6" fill="#d8f0dc"/></g></svg>
<svg class="abs" style="left:487px;top:139px" width="11" height="11" viewBox="0 0 11 11"><g transform="rotate(90 5.5 5.5)"><path d="M0 0 H11 V4 H8 V7.5 H4 V11 H0Z" fill="#5aa46f"/><rect x="1.6" y="1.6" width="1.8" height="1.8" fill="#d8f0dc"/><rect x="5" y="1.6" width="1.8" height="1.8" fill="#d8f0dc"/><rect x="8.2" y="1.4" width="1.6" height="1.4" fill="#d8f0dc"/><rect x="1.6" y="5" width="1.8" height="1.8" fill="#d8f0dc"/><rect x="5" y="4.8" width="1.6" height="1.4" fill="#d8f0dc"/><rect x="1.4" y="8.2" width="1.4" height="1.6" fill="#d8f0dc"/></g></svg>
<svg class="abs" style="left:487px;top:268px" width="11" height="11" viewBox="0 0 11 11"><g transform="rotate(180 5.5 5.5)"><path d="M0 0 H11 V4 H8 V7.5 H4 V11 H0Z" fill="#5aa46f"/><rect x="1.6" y="1.6" width="1.8" height="1.8" fill="#d8f0dc"/><rect x="5" y="1.6" width="1.8" height="1.8" fill="#d8f0dc"/><rect x="8.2" y="1.4" width="1.6" height="1.4" fill="#d8f0dc"/><rect x="1.6" y="5" width="1.8" height="1.8" fill="#d8f0dc"/><rect x="5" y="4.8" width="1.6" height="1.4" fill="#d8f0dc"/><rect x="1.4" y="8.2" width="1.4" height="1.6" fill="#d8f0dc"/></g></svg>
<svg class="abs" style="left:20px;top:268px" width="11" height="11" viewBox="0 0 11 11"><g transform="rotate(270 5.5 5.5)"><path d="M0 0 H11 V4 H8 V7.5 H4 V11 H0Z" fill="#5aa46f"/><rect x="1.6" y="1.6" width="1.8" height="1.8" fill="#d8f0dc"/><rect x="5" y="1.6" width="1.8" height="1.8" fill="#d8f0dc"/><rect x="8.2" y="1.4" width="1.6" height="1.4" fill="#d8f0dc"/><rect x="1.6" y="5" width="1.8" height="1.8" fill="#d8f0dc"/><rect x="5" y="4.8" width="1.6" height="1.4" fill="#d8f0dc"/><rect x="1.4" y="8.2" width="1.4" height="1.6" fill="#d8f0dc"/></g></svg>
<svg class="abs" style="left:445px;top:134px" width="36" height="20" viewBox="1322 182 36 20">
<defs><linearGradient id="lf1" x1="1" y1="0" x2="0" y2="0.3"><stop offset="0" stop-color="#3c8c3c"/><stop offset=".5" stop-color="#79b548"/><stop offset="1" stop-color="#d3e88f"/></linearGradient>
<linearGradient id="lf2" x1="1" y1="0" x2="0" y2="1"><stop offset="0" stop-color="#3c8c3c"/><stop offset=".55" stop-color="#79b548"/><stop offset="1" stop-color="#d3e88f"/></linearGradient>
<linearGradient id="lf3" x1="0" y1="0" x2="0.3" y2="1"><stop offset="0" stop-color="#3c8c3c"/><stop offset=".6" stop-color="#6fae45"/><stop offset="1" stop-color="#c5df7a"/></linearGradient></defs>
<path d="M1349.6 187.4 C1344 183.6 1333 183.8 1325.6 190.2 C1333 193.6 1344 192 1349.6 187.4Z" fill="url(#lf1)"/>
<path d="M1351.6 187.6 C1345 188 1338.6 192.6 1337.6 199.4 C1344.6 198.6 1350.6 194.6 1351.6 187.6Z" fill="url(#lf2)"/>
<path d="M1350.6 188 C1354.6 190.6 1356.4 195.6 1354.2 200 C1350.4 197.6 1349 192.6 1350.6 188Z" fill="url(#lf3)"/>
</svg>
<div class="ln j" style="left:41.60000000000002px;top:161px;width:435.6px;font-weight:500;color:#72ba98">端午节起源于中国，最初是中国人民祛病防疫的节日，吴越之地</div>
<div class="ln j" style="left:41.60000000000002px;top:185px;width:435.6px;font-weight:500;color:#72ba98">春秋之前有在农历五月初五以龙舟竞渡形式举行部落图腾祭祀的</div>
<div class="ln j" style="left:41.60000000000002px;top:209px;width:435.6px;font-weight:500;color:#72ba98">习俗；后因诗人屈原在这一天死去，便成了中国汉族人民纪念屈</div>
<div class="ln" style="left:41.60000000000002px;top:233px;width:435.6px;font-weight:500;color:#72ba98">原的传统节日；过端午节，是中国人二千多年来的传统习惯。</div>
<svg class="abs" style="left:237px;top:286px" width="44" height="48" viewBox="1114 334 44 48" opacity=".85">
<path d="M1136.9 358 C1136.4 365 1136.2 372 1136.2 378.4" stroke="#7fa88a" stroke-width="1.1" fill="none"/>
<path d="M1118.4 367 C1120.4 361.6 1128 357 1136.4 357.6 C1133.6 363 1126 367.6 1118.4 367Z" fill="#f2a3ae"/>
<path d="M1118.4 367 C1123 365.6 1130 361.6 1136.4 357.6 C1132.6 362.4 1125.6 367.4 1118.4 367Z" fill="#ec8f9c"/>
<path d="M1123.6 337 C1128 342.6 1133.6 348 1137 357.6 C1130.6 358.4 1125.6 354 1124.6 346.6 C1124.2 343 1123.8 340 1123.6 337Z" fill="#dd5a42"/>
<path d="M1125.6 342 C1128.6 347 1132.6 352 1135.6 357.2 C1131 356.6 1127.2 352.6 1125.6 342Z" fill="#ea8066"/>
<path d="M1152.8 346.2 C1151 352.6 1145 357.6 1137.4 358 C1140 352 1146 347.6 1152.8 346.2Z" fill="#ee8a8c"/>
<path d="M1138.6 340.4 C1140.6 345 1139.8 352 1137 357.6 C1133.6 352 1134.6 344 1138.6 340.4Z" fill="#e67a66"/>
<path d="M1144 341.4 C1147.6 345.6 1145 354 1137.2 357.8 C1137.6 351 1140 344.6 1144 341.4Z" fill="#d94c3e"/>
<path d="M1135.4 349.6 L1136.6 353.6" stroke="#e8b04a" stroke-width=".8"/>
</svg>
</div>
<div id="rt">
<svg class="abs" style="left:1426px;top:550px" width="118" height="56" viewBox="1426 550 118 56">
<defs><linearGradient id="bn" x1="0" y1="0" x2="1" y2="1"><stop offset="0" stop-color="#7480f9"/><stop offset=".5" stop-color="#6e68f7"/><stop offset="1" stop-color="#7b58f5"/></linearGradient></defs>
<rect x="1426" y="550" width="118" height="56" fill="url(#bn)"/>
<path d="M1426 580 C1440 562 1480 552 1544 556 V550 H1426Z" fill="#8088fb" opacity=".55"/>
<path d="M1426 606 C1440 590 1470 600 1500 606Z" fill="#7f8cfb" opacity=".5"/>
<rect x="1454.3" y="557.2" width="70.3" height="44.3" rx="3" fill="#5a54ee"/>
<rect x="1457.1" y="560.9" width="65" height="36.8" rx="2.6" fill="#f8f6ff"/>
<text x="1489.4" y="574.2" text-anchor="middle" font-family="Liberation Sans,Noto Sans CJK SC,sans-serif" font-size="10.8" fill="#f5a742">广告收入</text>
<text x="1489" y="591.4" text-anchor="middle" font-family="Liberation Sans,Noto Sans CJK SC,sans-serif" font-size="14.8" font-weight="500" fill="#6b63ee">涨涨涨</text>
<path d="M1427 588 L1434.6 581.6 L1441.6 594 L1437.4 597.4 L1440.6 606 H1432.6 L1431 601.6 L1426 598Z" fill="#7a40e2"/>
<ellipse cx="1442.8" cy="582.5" rx="8.4" ry="11.2" transform="rotate(-24 1442.6 582.7)" fill="#4a22b6" stroke="#f0a0ea" stroke-width=".8"/>
<ellipse cx="1439.4" cy="584.8" rx="3.4" ry="5.2" transform="rotate(-24 1439.6 584.6)" fill="#f8cdf5"/>
<path d="M1444.6 567.6 C1445.4 568.6 1445.8 569.6 1445.6 570.8" stroke="#a9a4ff" stroke-width=".7" fill="none"/>
<path d="M1541 608 L1531 577" stroke="#f6a23c" stroke-width="1.2" fill="none"/><ellipse cx="1534.9" cy="603.0" rx="5.2" ry="1.8" transform="rotate(-163 1534.9 603.0)" fill="#f6a23c"/><ellipse cx="1543.0" cy="600.3" rx="5.2" ry="1.8" transform="rotate(-53 1543.0 600.3)" fill="#f6a23c"/><ellipse cx="1533.4" cy="597.2" rx="4.8" ry="1.8" transform="rotate(-163 1533.4 597.2)" fill="#f6a23c"/><ellipse cx="1540.8" cy="594.9" rx="4.8" ry="1.8" transform="rotate(-53 1540.8 594.9)" fill="#f6a23c"/><ellipse cx="1532.0" cy="591.5" rx="4.3" ry="1.8" transform="rotate(-163 1532.0 591.5)" fill="#f6a23c"/><ellipse cx="1538.7" cy="589.4" rx="4.3" ry="1.8" transform="rotate(-53 1538.7 589.4)" fill="#f6a23c"/><ellipse cx="1530.6" cy="585.8" rx="3.8" ry="1.8" transform="rotate(-163 1530.6 585.8)" fill="#f6a23c"/><ellipse cx="1536.5" cy="583.9" rx="3.8" ry="1.8" transform="rotate(-53 1536.5 583.9)" fill="#f6a23c"/><ellipse cx="1529.1" cy="580.1" rx="3.4" ry="1.8" transform="rotate(-163 1529.1 580.1)" fill="#f6a23c"/><ellipse cx="1534.3" cy="578.4" rx="3.4" ry="1.8" transform="rotate(-53 1534.3 578.4)" fill="#f6a23c"/><ellipse cx="1531.0" cy="577.0" rx="3.3" ry="1.8" transform="rotate(-108 1531.0 577.0)" fill="#f6a23c"/>
<path d="M1546 583 L1532 558" stroke="#f8df52" stroke-width="1.2" fill="none"/><ellipse cx="1539.7" cy="579.7" rx="4.7" ry="1.6" transform="rotate(-174 1539.7 579.7)" fill="#f8df52"/><ellipse cx="1546.5" cy="575.9" rx="4.7" ry="1.6" transform="rotate(-64 1546.5 575.9)" fill="#f8df52"/><ellipse cx="1537.5" cy="575.0" rx="4.3" ry="1.6" transform="rotate(-174 1537.5 575.0)" fill="#f8df52"/><ellipse cx="1543.7" cy="571.6" rx="4.3" ry="1.6" transform="rotate(-64 1543.7 571.6)" fill="#f8df52"/><ellipse cx="1535.3" cy="570.3" rx="3.9" ry="1.6" transform="rotate(-174 1535.3 570.3)" fill="#f8df52"/><ellipse cx="1540.8" cy="567.2" rx="3.9" ry="1.6" transform="rotate(-64 1540.8 567.2)" fill="#f8df52"/><ellipse cx="1533.0" cy="565.7" rx="3.5" ry="1.6" transform="rotate(-174 1533.0 565.7)" fill="#f8df52"/><ellipse cx="1538.0" cy="562.9" rx="3.5" ry="1.6" transform="rotate(-64 1538.0 562.9)" fill="#f8df52"/><ellipse cx="1530.8" cy="561.0" rx="3.0" ry="1.6" transform="rotate(-174 1530.8 561.0)" fill="#f8df52"/><ellipse cx="1535.2" cy="558.6" rx="3.0" ry="1.6" transform="rotate(-64 1535.2 558.6)" fill="#f8df52"/><ellipse cx="1532.0" cy="558.0" rx="3.0" ry="1.6" transform="rotate(-119 1532.0 558.0)" fill="#f8df52"/>
</svg>
<div class="rb" style="top:621px">导入内容</div>
<div class="rb" style="top:661px">预览</div>
<div class="rb" style="top:701px">复制</div>
<div class="rb" style="top:741px">存为草稿</div>
<div class="rb" style="top:781px">清空</div>
<div class="rb" style="top:821px">存为模板</div>
<div class="abs" style="left:1426px;top:894px;width:91px;height:4px;background:#b5e6f8;border-top:1px solid #86c3ea;border-radius:3px 3px 0 0"></div>
<div class="abs" style="left:1496px;top:894px;width:21px;height:4px;background:#f7b72a;border-radius:0 3px 0 0"></div>
</div>
</body>
</html>
